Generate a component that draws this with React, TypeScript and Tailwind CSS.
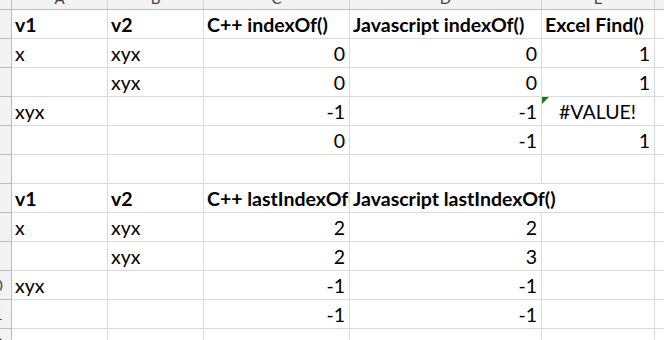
import React from "react";

type Cell = {
  text?: string;
  align?: "left" | "right" | "center";
  bold?: boolean;
  clip?: boolean; // text cut at the cell edge (neighbour has content)
  spill?: boolean; // text runs over into the empty neighbour, gridline hidden
  flag?: boolean; // green error triangle
};

const widths = ["w-[96px]", "w-[96px]", "w-[146px]", "w-[192px]", "w-[113px]", "w-[100px]"];
const letters = ["A", "B", "C", "D", "E", "F"];

const h = (text: string, extra: Partial<Cell> = {}): Cell => ({ text, bold: true, ...extra });
const l = (text: string): Cell => ({ text });
const r = (text: string): Cell => ({ text, align: "right" });
const e: Cell = {};

const rows: Cell[][] = [
  [h("v1"), h("v2"), h("C++ indexOf()"), h("Javascript indexOf()"), h("Excel Find()"), e],
  [l("x"), l("xyx"), r("0"), r("0"), r("1"), e],
  [e, l("xyx"), r("0"), r("0"), r("1"), e],
  [l("xyx"), e, r("-1"), r("-1"), { text: "#VALUE!", align: "center", flag: true }, e],
  [e, e, r("0"), r("-1"), r("1"), e],
  [e, e, e, e, e, e],
  [h("v1"), h("v2"), h("C++ lastIndexOf()", { clip: true }), h("Javascript lastIndexOf()", { spill: true }), e, e],
  [l("x"), l("xyx"), r("2"), r("2"), e, e],
  [e, l("xyx"), r("2"), r("3"), e, e],
  [l("xyx"), e, r("-1"), r("-1"), e, e],
  [e, e, r("-1"), r("-1"), e, e],
  [e, e, e, e, e, e],
];

function GridCell({ cell, col }: { cell: Cell; col: number }) {
  const justify =
    cell.align === "right" ? "justify-end" : cell.align === "center" ? "justify-center" : "justify-start";
  return (
    <div
      className={`relative h-[29px] shrink-0 border-b border-[#dadada] flex items-end pb-[3px] pl-[3px] pr-[4px] ${justify} ${
        widths[col]
      } ${cell.spill ? "" : "border-r"} ${cell.clip ? "overflow-hidden" : ""}`}
    >
      {cell.flag && (
        <svg className="absolute left-0 top-0" width="7" height="7" viewBox="0 0 7 7">
          <polygon points="0,0 7,0 0,7" fill="#1f7a1f" />
        </svg>
      )}
      {cell.text && (
        <span className={`whitespace-nowrap leading-[20px] ${cell.bold ? "font-bold" : ""}`}>{cell.text}</span>
      )}
    </div>
  );
}

export default function App() {
  return (
    <div
      className="w-[664px] h-[340px] overflow-hidden bg-white text-[19.5px] text-black"
      style={{ fontFamily: "Lato, 'Liberation Sans', sans-serif" }}
    >
      {/* column letters, mostly scrolled out of view */}
      <div className="flex h-[10px] bg-[#f3f3f3] border-b border-[#bdbdbd]">
        <div className="w-[12px] shrink-0 border-r border-[#bdbdbd]" />
        {letters.map((c, i) => (
          <div
            key={c}
            className={`${widths[i]} shrink-0 h-[9px] overflow-hidden flex items-end justify-center border-r border-[#d4d4d4]`}
          >
            <span className="text-[15px] leading-[15px] mb-[3px] text-[#444]">{c}</span>
          </div>
        ))}
      </div>

      {rows.map((row, ri) => (
        <div key={ri} className="flex">
          {/* row numbers, only the right edge shows */}
          <div className="w-[12px] shrink-0 h-[29px] overflow-hidden bg-[#f3f3f3] border-r border-b border-[#bdbdbd]">
            <div className="w-[34px] -ml-[23px] h-full flex items-center justify-center text-[15px] text-[#444]">
              {ri + 1}
            </div>
          </div>
          {row.map((cell, ci) => (
            <GridCell key={ci} cell={cell} col={ci} />
          ))}
        </div>
      ))}
    </div>
  );
}
